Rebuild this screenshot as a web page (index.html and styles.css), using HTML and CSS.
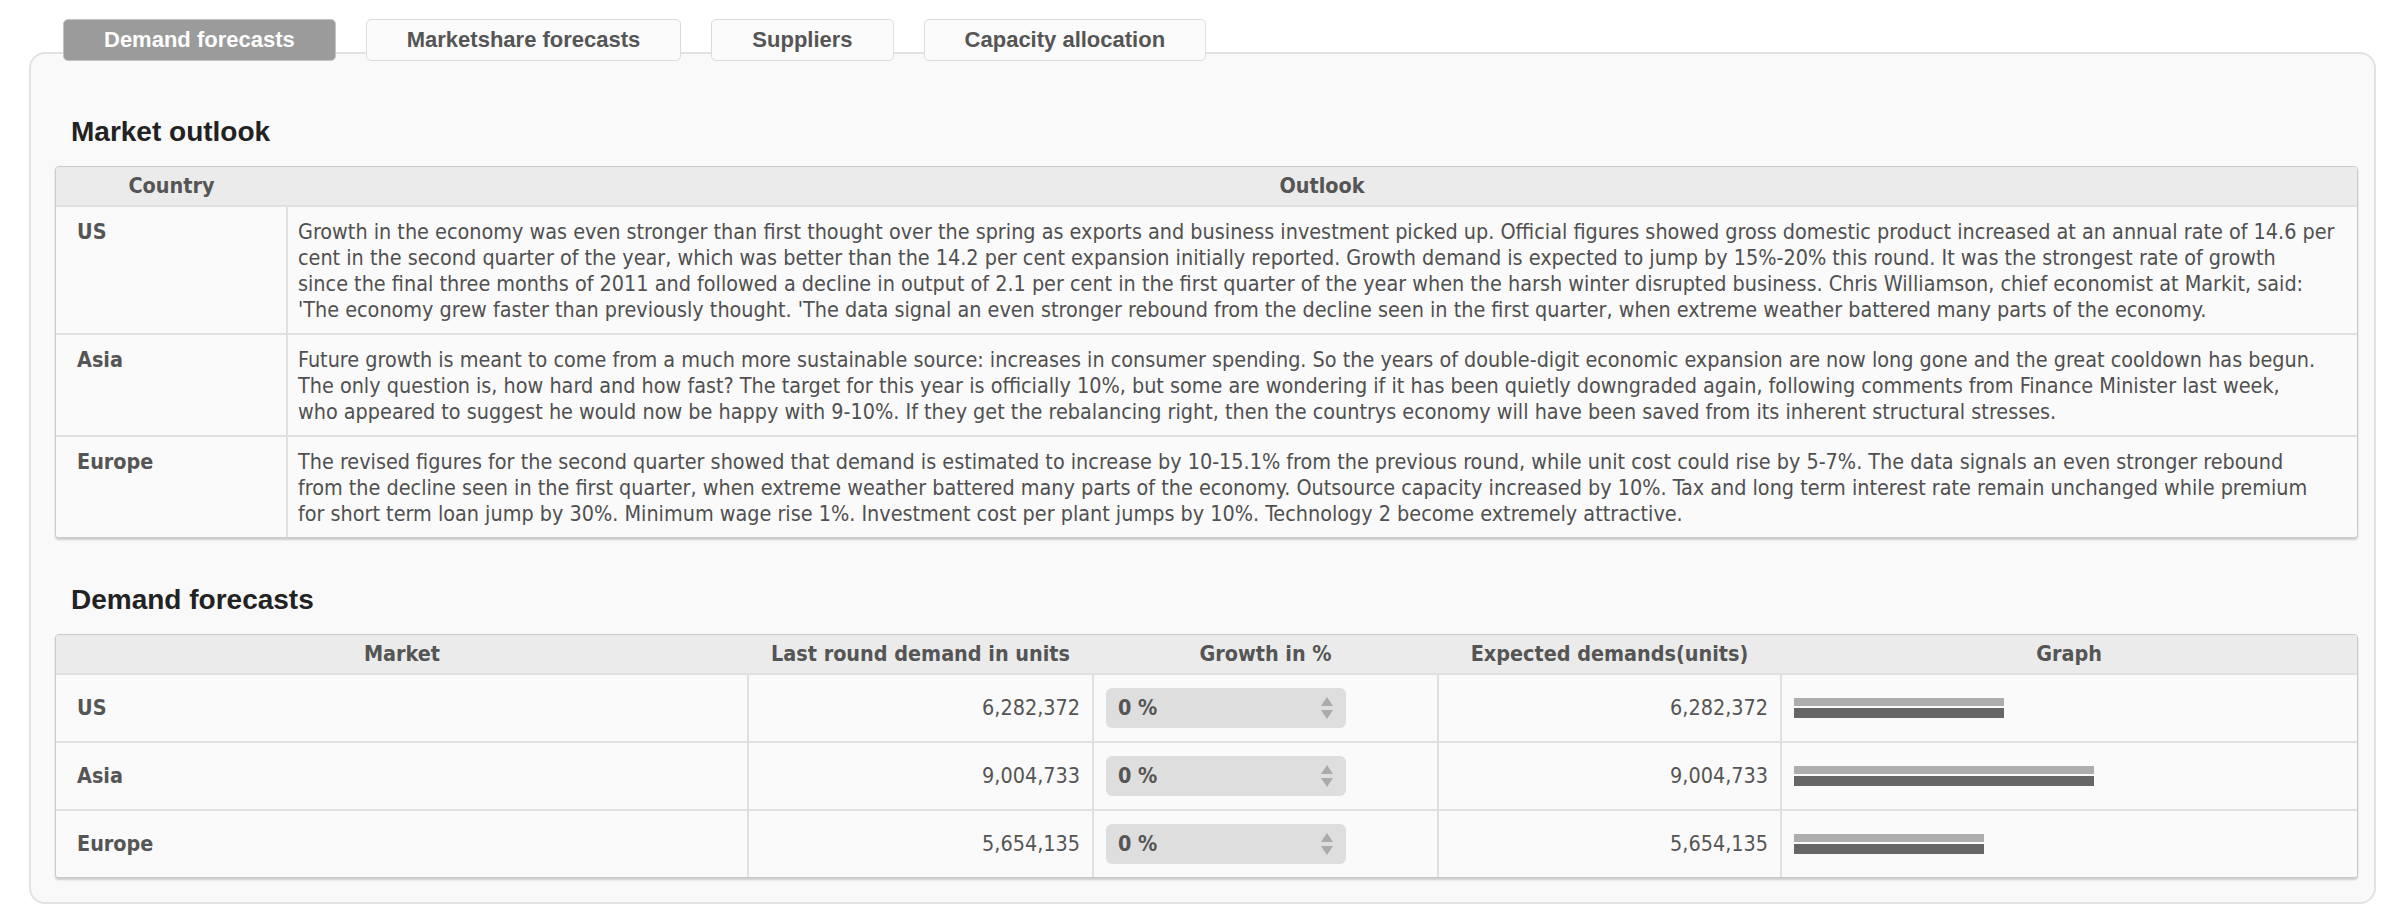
FILE: index.html
```html
<!DOCTYPE html>
<html lang="en">
<head>
<meta charset="utf-8">
<title>Demand forecasts</title>
<link rel="stylesheet" href="styles.css">
</head>
<body>
<div class="wrap">
  <div class="tabs">
    <div class="tab active">Demand forecasts</div>
    <div class="tab">Marketshare forecasts</div>
    <div class="tab">Suppliers</div>
    <div class="tab">Capacity allocation</div>
  </div>
  <div class="panel">
    <h2 class="section-title">Market outlook</h2>
    <div class="grid-box">
      <table class="grid outlook">
        <colgroup><col class="c-country"><col></colgroup>
        <thead>
          <tr><th>Country</th><th>Outlook</th></tr>
        </thead>
        <tbody>
          <tr>
            <td class="label">US</td>
            <td class="text">Growth in the economy was even stronger than first thought over the spring as exports and business investment picked up. Official figures showed gross domestic product increased at an annual rate of 14.6 per<br>cent in the second quarter of the year, which was better than the 14.2 per cent expansion initially reported. Growth demand is expected to jump by 15%-20% this round. It was the strongest rate of growth<br>since the final three months of 2011 and followed a decline in output of 2.1 per cent in the first quarter of the year when the harsh winter disrupted business. Chris Williamson, chief economist at Markit, said:<br>'The economy grew faster than previously thought. 'The data signal an even stronger rebound from the decline seen in the first quarter, when extreme weather battered many parts of the economy.</td>
          </tr>
          <tr>
            <td class="label">Asia</td>
            <td class="text">Future growth is meant to come from a much more sustainable source: increases in consumer spending. So the years of double-digit economic expansion are now long gone and the great cooldown has begun.<br>The only question is, how hard and how fast? The target for this year is officially 10%, but some are wondering if it has been quietly downgraded again, following comments from Finance Minister last week,<br>who appeared to suggest he would now be happy with 9-10%. If they get the rebalancing right, then the countrys economy will have been saved from its inherent structural stresses.</td>
          </tr>
          <tr>
            <td class="label">Europe</td>
            <td class="text">The revised figures for the second quarter showed that demand is estimated to increase by 10-15.1% from the previous round, while unit cost could rise by 5-7%. The data signals an even stronger rebound<br>from the decline seen in the first quarter, when extreme weather battered many parts of the economy. Outsource capacity increased by 10%. Tax and long term interest rate remain unchanged while premium<br>for short term loan jump by 30%. Minimum wage rise 1%. Investment cost per plant jumps by 10%. Technology 2 become extremely attractive.</td>
          </tr>
        </tbody>
      </table>
    </div>

    <h2 class="section-title second">Demand forecasts</h2>
    <div class="grid-box">
      <table class="grid demand">
        <colgroup>
          <col class="c-market"><col class="c-last"><col class="c-growth"><col class="c-exp"><col>
        </colgroup>
        <thead>
          <tr>
            <th>Market</th>
            <th>Last round demand in units</th>
            <th>Growth in %</th>
            <th>Expected demands(units)</th>
            <th>Graph</th>
          </tr>
        </thead>
        <tbody>
          <tr>
            <td class="label">US</td>
            <td class="num">6,282,372</td>
            <td class="growth"><div class="spin"><span>0 %</span><svg class="arrows" width="14" height="24" viewBox="0 0 14 24"><path d="M7 1 L13 10 L1 10 Z"/><path d="M1 14 L13 14 L7 23 Z"/></svg></div></td>
            <td class="num">6,282,372</td>
            <td class="graph"><div class="bar light" style="width:210px"></div><div class="bar dark" style="width:210px"></div></td>
          </tr>
          <tr>
            <td class="label">Asia</td>
            <td class="num">9,004,733</td>
            <td class="growth"><div class="spin"><span>0 %</span><svg class="arrows" width="14" height="24" viewBox="0 0 14 24"><path d="M7 1 L13 10 L1 10 Z"/><path d="M1 14 L13 14 L7 23 Z"/></svg></div></td>
            <td class="num">9,004,733</td>
            <td class="graph"><div class="bar light" style="width:300px"></div><div class="bar dark" style="width:300px"></div></td>
          </tr>
          <tr>
            <td class="label">Europe</td>
            <td class="num">5,654,135</td>
            <td class="growth"><div class="spin"><span>0 %</span><svg class="arrows" width="14" height="24" viewBox="0 0 14 24"><path d="M7 1 L13 10 L1 10 Z"/><path d="M1 14 L13 14 L7 23 Z"/></svg></div></td>
            <td class="num">5,654,135</td>
            <td class="graph"><div class="bar light" style="width:190px"></div><div class="bar dark" style="width:190px"></div></td>
          </tr>
        </tbody>
      </table>
    </div>
  </div>
</div>
</body>
</html>
```
FILE: styles.css
```css
html, body {
  margin: 0;
  padding: 0;
  background: #ffffff;
}

.wrap {
  padding: 19px 16px 0 29px;
}

.tabs {
  display: flex;
  gap: 30px;
  margin-left: 34px;
  margin-bottom: -9px;
  position: relative;
  z-index: 2;
}

.tab {
  height: 40px;
  line-height: 40px;
  padding: 0 40px;
  border: 1px solid #dcdcdc;
  border-radius: 5px;
  background: #fbfbfb;
  color: #555555;
  font-family: "Liberation Sans", Arial, sans-serif;
  font-weight: bold;
  font-size: 22px;
  white-space: nowrap;
}

.tab.active {
  background: #9b9b9b;
  border-color: #c4c4c4;
  color: #ffffff;
}

.panel {
  border: 2px solid #e2e2e2;
  border-radius: 16px;
  background: #f9f9f9;
  padding: 62px 16px 24px 24px;
  height: 852px;
  box-sizing: border-box;
}

.section-title {
  margin: 0 0 18px 16px;
  font-family: "Liberation Sans", Arial, sans-serif;
  font-weight: bold;
  font-size: 28px;
  line-height: 32px;
  color: #222222;
}

.section-title.second {
  margin-top: 46px;
}

.grid-box {
  border: 1px solid #c9c9c9;
  border-radius: 4px;
  overflow: hidden;
  box-shadow: 0 2px 2px rgba(0, 0, 0, 0.18);
  background: #fafafa;
}

.grid {
  width: 100%;
  border-collapse: collapse;
  table-layout: fixed;
  font-family: "DejaVu Sans Condensed", "DejaVu Sans", sans-serif;
  font-stretch: condensed;
  font-size: 21.4px;
  color: #555555;
}

.grid th {
  height: 38px;
  padding: 0 10px;
  background: #ebebeb;
  font-weight: bold;
  text-align: center;
  color: #555555;
  line-height: 26px;
}

.grid td {
  border-top: 2px solid #e0e0e0;
  border-left: 2px solid #e0e0e0;
  vertical-align: top;
  line-height: 26px;
  background: #fafafa;
}

.grid td:first-child {
  border-left: none;
}

.outlook .c-country { width: 231px; }

.outlook td {
  padding: 12px 10px 10px 10px;
}

.outlook td.label {
  padding-left: 21px;
}

.label {
  font-weight: bold;
}

.text {
  color: #505050;
}

.demand .c-market { width: 692px; }
.demand .c-last { width: 345px; }
.demand .c-growth { width: 345px; }
.demand .c-exp { width: 343px; }

.demand td {
  height: 66px;
  padding: 0 12px;
  vertical-align: middle;
}

.demand td.label {
  padding-left: 21px;
}

.demand td.num {
  text-align: right;
}

.demand td.growth {
  padding-left: 12px;
}

.spin {
  width: 240px;
  height: 40px;
  box-sizing: border-box;
  background: #dedede;
  border-radius: 6px;
  display: flex;
  align-items: center;
  justify-content: space-between;
  padding: 0 12px 0 12px;
  font-weight: bold;
  color: #555555;
}

.arrows path {
  fill: #ababab;
}

.graph {
  padding-left: 12px;
}

.bar {
  height: 8px;
}

.bar.light {
  background: #aeaeae;
  margin-bottom: 2px;
}

.bar.dark {
  background: #666666;
  height: 10px;
}
```
